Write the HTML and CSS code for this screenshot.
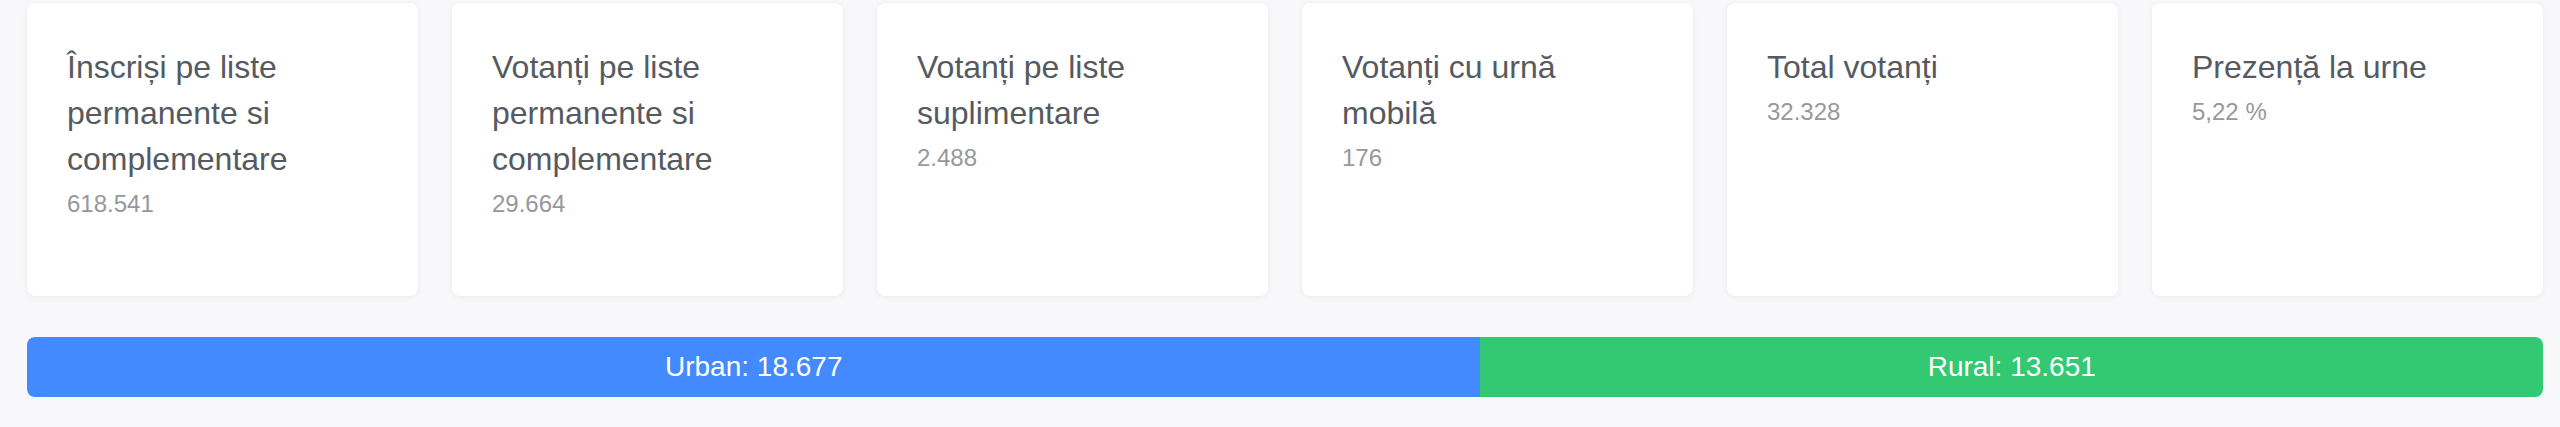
FILE: index.html
```html
<!DOCTYPE html>
<html lang="ro">
<head>
<meta charset="utf-8">
<title>Prezență</title>
<link rel="stylesheet" href="styles.css">
</head>
<body>
<main class="page">
  <section class="cards">
    <div class="card">
      <div class="card-title">Înscriși pe liste permanente si complementare</div>
      <div class="card-value">618.541</div>
    </div>
    <div class="card">
      <div class="card-title">Votanți pe liste permanente si complementare</div>
      <div class="card-value">29.664</div>
    </div>
    <div class="card">
      <div class="card-title">Votanți pe liste suplimentare</div>
      <div class="card-value">2.488</div>
    </div>
    <div class="card">
      <div class="card-title">Votanți cu urnă mobilă</div>
      <div class="card-value">176</div>
    </div>
    <div class="card">
      <div class="card-title">Total votanți</div>
      <div class="card-value">32.328</div>
    </div>
    <div class="card">
      <div class="card-title">Prezență la urne</div>
      <div class="card-value">5,22 %</div>
    </div>
  </section>
  <div class="split-bar">
    <div class="split urban" style="width: 57.77%">Urban: 18.677</div>
    <div class="split rural" style="width: 42.23%">Rural: 13.651</div>
  </div>
</main>
</body>
</html>
```

FILE: styles.css
```css
* {
  box-sizing: border-box;
}

html, body {
  margin: 0;
  padding: 0;
  background: #f8f8fa;
}

body {
  font-family: "Liberation Sans", Arial, sans-serif;
  width: 2560px;
  height: 427px;
  overflow: hidden;
}

.page {
  padding: 3px 17px 30px 27px;
  display: flex;
  flex-direction: column;
  gap: 41px;
}

.cards {
  display: grid;
  grid-template-columns: repeat(6, 391px);
  column-gap: 34px;
}

.card {
  background: #ffffff;
  border-radius: 8px;
  box-shadow: 0 1px 6px rgba(0, 0, 0, 0.05), 0 0 2px rgba(0, 0, 0, 0.03);
  padding: 41px 40px 30px 40px;
  min-height: 293px;
}

.card-title {
  font-size: 32px;
  line-height: 46px;
  color: #555a61;
  padding-right: 60px;
}

.card-value {
  margin-top: 4px;
  font-size: 24px;
  line-height: 36px;
  color: #95989e;
}

.split-bar {
  display: flex;
  height: 60px;
  border-radius: 8px;
  overflow: hidden;
}

.split {
  display: flex;
  align-items: center;
  justify-content: center;
  color: #ffffff;
  font-size: 28px;
}

.urban {
  background: #438afe;
}

.rural {
  background: #33c872;
}
```
